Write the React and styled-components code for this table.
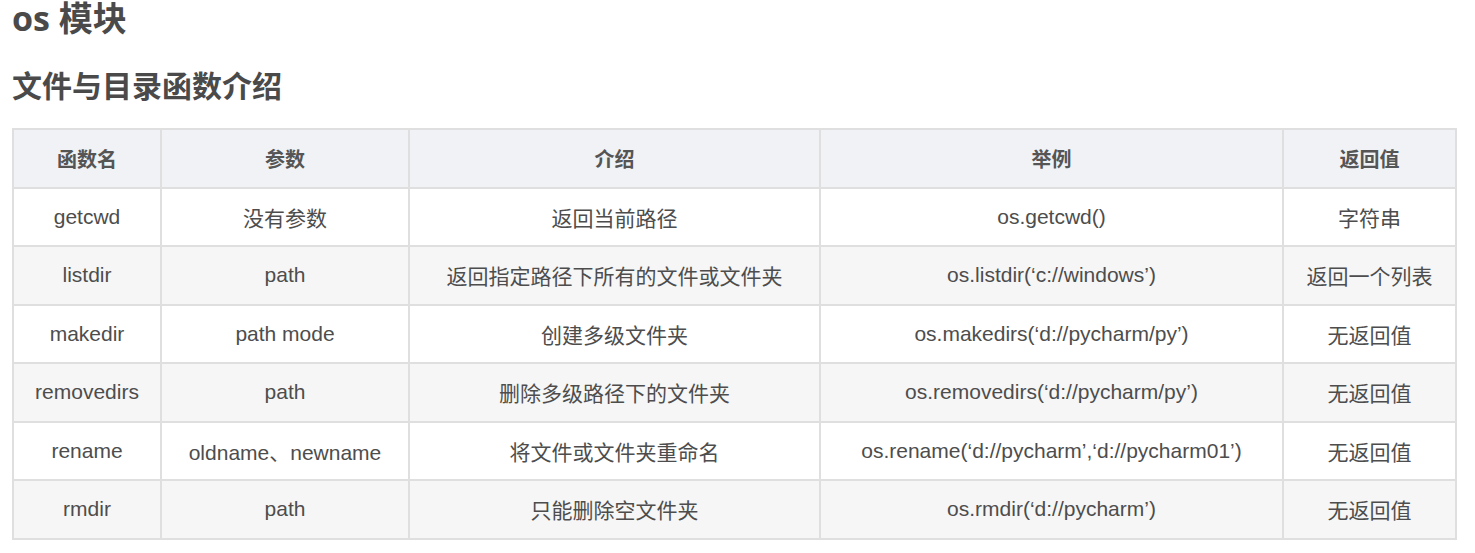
import React from 'react'
import styled, {createGlobalStyle} from 'styled-components'

const GlobalStyle = createGlobalStyle`
    body {
        margin: 0;
        background: #fff;
        font-family: "Liberation Sans", Arial, "Noto Sans CJK SC", sans-serif;
        color: #4d4d4d;
    }
`

const Page = styled.div`
    padding: 0 12px;
`

const Title = styled.h1`
    margin: 0;
    font-size: 34px;
    line-height: 36px;
    font-weight: 700;
    color: #4a4a4a;
    font-family: "Open Sans", "Noto Sans CJK SC", sans-serif;
`

const SubTitle = styled.h2`
    margin: 29px 0 25px;
    font-size: 30px;
    line-height: 38px;
    font-weight: 700;
    color: #4a4a4a;
    font-family: "Noto Sans CJK SC", sans-serif;
`

const Table = styled.table`
    border-collapse: collapse;
    width: 1443px;
    table-layout: fixed;
    font-size: 21px;
`

const Col = styled.col`
    width: ${p => p.$w}px;
`

const HeadCell = styled.th`
    height: 56.5px;
    padding: 0;
    border: 2px solid #dfdfdf;
    background: #f0f2f5;
    font-weight: 700;
    font-size: 20px;
    color: #555;
    text-align: center;
    font-family: "Noto Sans CJK SC", sans-serif;
`

const Row = styled.tr`
    background: ${p => (p.$odd ? '#f6f6f6' : '#fff')};
`

const Cell = styled.td`
    height: 56.5px;
    padding: 0;
    border: 2px solid #dfdfdf;
    text-align: center;
    color: #4d4d4d;
`

const columns = [
    {label: '函数名', w: 148},
    {label: '参数', w: 248},
    {label: '介绍', w: 411},
    {label: '举例', w: 463},
    {label: '返回值', w: 173},
]

const rows = [
    ['getcwd', '没有参数', '返回当前路径', 'os.getcwd()', '字符串'],
    ['listdir', 'path', '返回指定路径下所有的文件或文件夹', 'os.listdir(‘c://windows’)', '返回一个列表'],
    ['makedir', 'path mode', '创建多级文件夹', 'os.makedirs(‘d://pycharm/py’)', '无返回值'],
    ['removedirs', 'path', '删除多级路径下的文件夹', 'os.removedirs(‘d://pycharm/py’)', '无返回值'],
    ['rename', 'oldname、newname', '将文件或文件夹重命名', 'os.rename(‘d://pycharm’,‘d://pycharm01’)', '无返回值'],
    ['rmdir', 'path', '只能删除空文件夹', 'os.rmdir(‘d://pycharm’)', '无返回值'],
]

const App = () => {
    return (
        <Page>
            <GlobalStyle/>
            <Title>os 模块</Title>
            <SubTitle>文件与目录函数介绍</SubTitle>
            <Table>
                <colgroup>
                    {columns.map(c => <Col key={c.label} $w={c.w}/>)}
                </colgroup>
                <thead>
                    <tr>
                        {columns.map(c => (
                            <HeadCell key={c.label}>{c.label}</HeadCell>
                        ))}
                    </tr>
                </thead>
                <tbody>
                    {rows.map((r, i) => (
                        <Row key={r[0]} $odd={i % 2 === 1}>
                            {r.map((v, j) => <Cell key={j}>{v}</Cell>)}
                        </Row>
                    ))}
                </tbody>
            </Table>
        </Page>
    )
}

export default App
